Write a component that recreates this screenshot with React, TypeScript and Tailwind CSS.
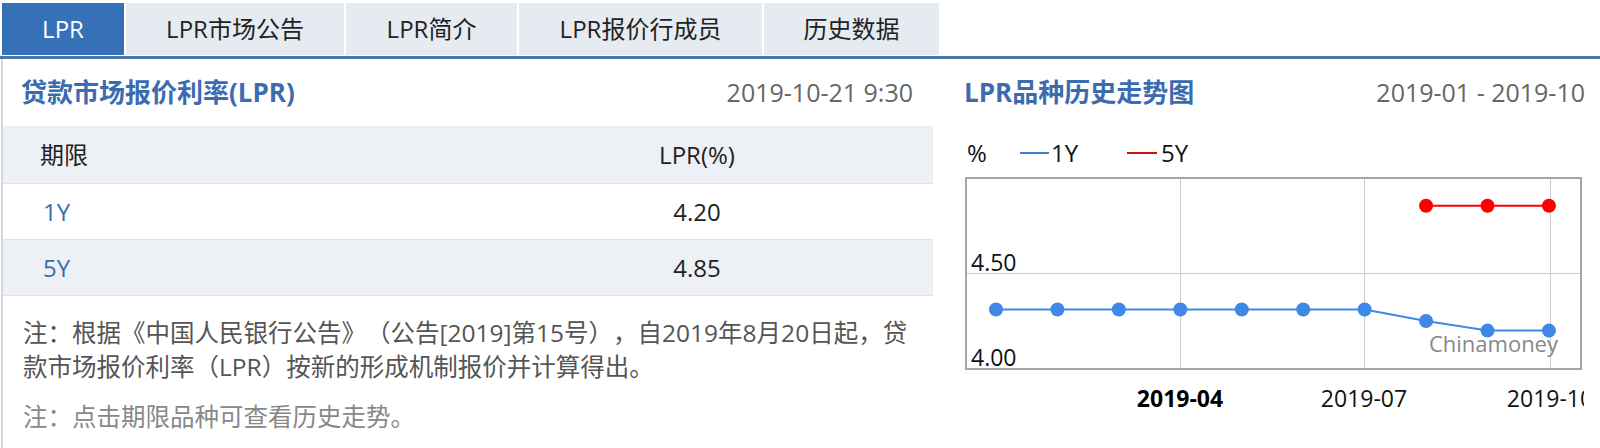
import React from 'react';

const tabs = [
  { label: 'LPR', width: 'w-[122px]', active: true },
  { label: 'LPR市场公告', width: 'w-[218px]' },
  { label: 'LPR简介', width: 'w-[171px]' },
  { label: 'LPR报价行成员', width: 'w-[243px]' },
  { label: '历史数据', width: 'w-[175px]' },
];

const rows = [
  { term: '1Y', rate: '4.20', shaded: false },
  { term: '5Y', rate: '4.85', shaded: true },
];

// chart data, Jan..Oct 2019
const oneY = [4.31, 4.31, 4.31, 4.31, 4.31, 4.31, 4.31, 4.25, 4.2, 4.2];
const fiveY: (number | null)[] = [null, null, null, null, null, null, null, 4.85, 4.85, 4.85];
const xAt = (i: number) => 31 + i * 61.44;
const yAt = (v: number) => 199 - (v - 4) * 192;

const TrendChart: React.FC = () => {
  const bluePts = oneY.map((v, i) => `${xAt(i)},${yAt(v)}`).join(' ');
  const redPts = fiveY
    .map((v, i) => (v == null ? null : `${xAt(i)},${yAt(v)}`))
    .filter(Boolean)
    .join(' ');

  return (
    <svg width={619} height={278} className="block">
      {/* grid */}
      <line x1={1} y1={103.5} x2={616} y2={103.5} stroke="#cccccc" strokeWidth={1} />
      {[215.5, 399.5, 585.5].map((x) => (
        <line key={x} x1={x} y1={8} x2={x} y2={199} stroke="#cccccc" strokeWidth={1} />
      ))}
      <rect x={1} y={8} width={615} height={191} fill="none" stroke="#a1a6ad" strokeWidth={2} />

      <text x={6} y={101} fontSize={23} fill="#111">4.50</text>
      <text x={6} y={196} fontSize={23} fill="#111">4.00</text>
      <text x={593} y={182} fontSize={22} fill="#888" textAnchor="end">Chinamoney</text>

      <polyline points={bluePts} fill="none" stroke="#3f88e6" strokeWidth={2} />
      {oneY.map((v, i) => (
        <circle key={i} cx={xAt(i)} cy={yAt(v)} r={7} fill="#3f88e6" />
      ))}
      <polyline points={redPts} fill="none" stroke="#ff0000" strokeWidth={2} />
      {fiveY.map((v, i) =>
        v == null ? null : <circle key={i} cx={xAt(i)} cy={yAt(v)} r={7} fill="#ff0000" />
      )}

      <text x={215} y={237} fontSize={23} fontWeight={700} fill="#000" textAnchor="middle">2019-04</text>
      <text x={399} y={237} fontSize={23} fill="#111" textAnchor="middle">2019-07</text>
      <text x={585} y={237} fontSize={23} fill="#111" textAnchor="middle">2019-10</text>
    </svg>
  );
};

const App: React.FC = () => {
  return (
    <div className="w-[1600px] h-[448px] overflow-hidden bg-white font-['Open_Sans','Noto_Sans_CJK_SC',sans-serif] text-[#222]">
      {/* tabs */}
      <div className="flex gap-[2px] pl-[2px] pt-[3px]">
        {tabs.map((t) => (
          <div
            key={t.label}
            className={`${t.width} h-[52px] flex items-center justify-center text-[24px] ${
              t.active ? 'bg-[#3671b8] text-white' : 'bg-[#e6ebf2] text-[#222]'
            }`}
          >
            {t.label}
          </div>
        ))}
      </div>
      <div className="mt-[1px] h-[3px] bg-[#4b76a6]" />

      <div className="flex">
        {/* left: rate table */}
        <div className="ml-[1px] w-[932px] h-[389px] border-l-2 border-[#d3d6da]">
          <div className="h-[67px] flex items-center justify-between pl-[18px] pr-[20px]">
            <span className="text-[26px] font-bold text-[#3b6cb0]">贷款市场报价利率(LPR)</span>
            <span className="text-[25px] text-[#666]">2019-10-21 9:30</span>
          </div>

          <div className="h-[58px] flex items-center bg-[#edf1f6] border-b border-[#dde3ea] text-[24px]">
            <div className="flex-1 pl-[37px]">期限</div>
            <div className="w-[472px] text-center">LPR(%)</div>
          </div>
          {rows.map((r) => (
            <div
              key={r.term}
              className={`h-[56px] flex items-center border-b border-[#dde3ea] text-[24px] ${
                r.shaded ? 'bg-[#edf1f6]' : 'bg-white'
              }`}
            >
              <div className="flex-1 pl-[40px] text-[#3b6cb0]">{r.term}</div>
              <div className="w-[472px] text-center">{r.rate}</div>
            </div>
          ))}

          <div className="pl-[20px] pt-[20px] text-[24.5px] leading-[34px] text-[#555] whitespace-nowrap [text-spacing-trim:space-all]">
            注：根据《中国人民银行公告》（公告[2019]第15号），自2019年8月20日起，贷
            <br />
            款市场报价利率（LPR）按新的形成机制报价并计算得出。
          </div>
          <div className="pl-[20px] mt-[16px] text-[24.5px] leading-[34px] text-[#888] [text-spacing-trim:space-all]">
            注：点击期限品种可查看历史走势。
          </div>
        </div>

        {/* right: trend chart */}
        <div className="flex-1">
          <div className="h-[67px] flex items-center justify-between pl-[31px] pr-[15px]">
            <span className="text-[26px] font-bold text-[#3b6cb0]">LPR品种历史走势图</span>
            <span className="text-[25px] text-[#666]">2019-01 - 2019-10</span>
          </div>
          <div className="mt-[10px] h-[34px] flex items-center pl-[34px] text-[24px] text-[#111]">
            <span className="w-[53px]">%</span>
            <span className="w-[29px] h-[2px] bg-[#3f7fd0]" />
            <span className="ml-[2px] w-[76px]">1Y</span>
            <span className="w-[30px] h-[2px] bg-[#d01010]" />
            <span className="ml-[4px]">5Y</span>
          </div>
          <div className="ml-[32px]">
            <TrendChart />
          </div>
        </div>
      </div>
    </div>
  );
};

export default App;
